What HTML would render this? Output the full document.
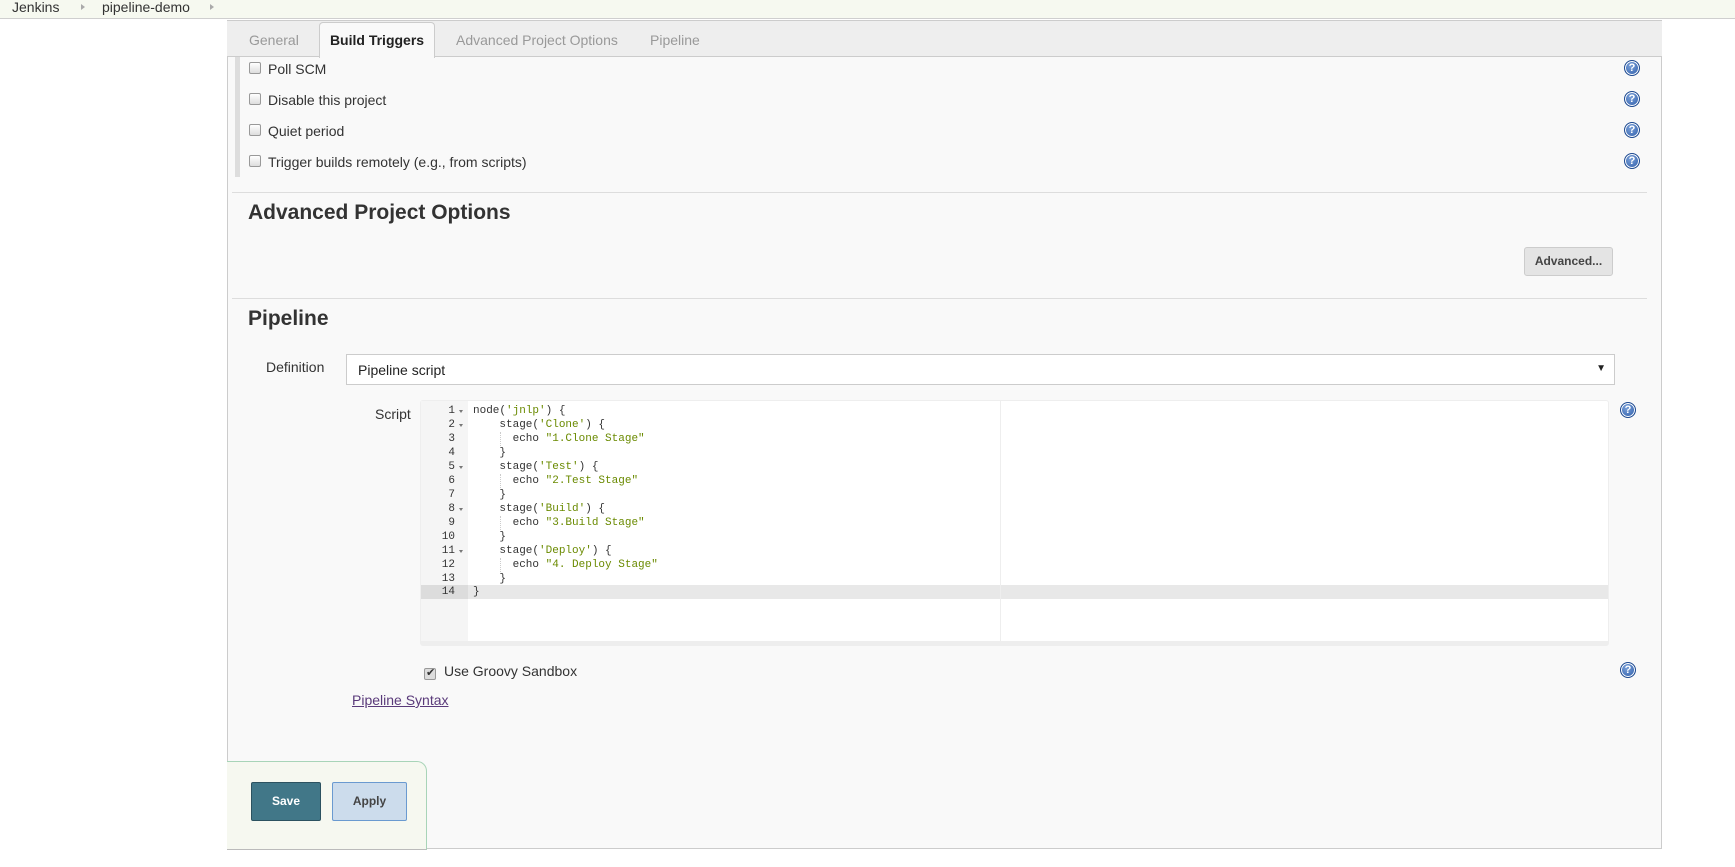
<!DOCTYPE html>
<html><head><meta charset="utf-8"><style>
*{box-sizing:border-box;margin:0;padding:0}
body{width:1735px;height:867px;background:#fff;font-family:"Liberation Sans",Arial,sans-serif;font-size:14px;color:#333;position:relative;overflow:hidden}
.abs{position:absolute}
#bc{left:0;top:0;width:1735px;height:19px;background:#f6f9f0;border-bottom:1px solid #cfcfcf}
#bc span{position:absolute;top:0;font-size:14px;color:#333;line-height:14px}
.arr{width:0;height:0;border-left:4px solid #aaa;border-top:3px solid transparent;border-bottom:3px solid transparent;position:absolute;top:4px}
#panel{left:227px;top:20px;width:1435px;height:829px;background:#f9f9f9;border:1px solid #ccc;border-top:none}
#tabs{left:227px;top:20px;width:1435px;height:37px;background:#eee;border-bottom:1px solid #ccc;border-top:1px solid #ccc}
.tab{position:absolute;top:11px;font-size:14px;color:#999}
#acttab{left:319px;top:22px;width:116px;height:36px;background:#f9f9f9;border:1px solid #ccc;border-bottom:none;border-radius:4px 4px 0 0;font-weight:bold;color:#222;text-align:center;line-height:34px;font-size:14px}
.cb{position:absolute;width:12px;height:12px;border:1px solid #999;border-radius:2px;background:linear-gradient(#fff,#ddd)}
.lbl{position:absolute;font-size:14px;color:#333}
.help{position:absolute;width:16px;height:16px;border-radius:50%;background:radial-gradient(circle at 40% 35%,#7aa0d8,#2a5aa8);border:1px solid #1e4a90;box-shadow:inset 0 0 0 1px #fff;color:#fff;font-weight:bold;font-size:11px;text-align:center;line-height:14px}
.sep{position:absolute;left:232px;width:1415px;height:1px;background:#ddd}
h2{position:absolute;font-size:21px;font-weight:bold;color:#333}
#code{left:420px;top:400px;width:1189px;height:246px;background:#fff;border:1px solid #eee;border-bottom:5px solid #eee;border-radius:3px}
#gut{left:421px;top:401px;width:47px;height:240px;background:#f5f5f5}
.ln{position:absolute;left:421px;width:34px;text-align:right;font-family:"Liberation Mono",monospace;font-size:11px;color:#333;height:14px;line-height:14px}
.cl{position:absolute;left:473px;font-family:"Liberation Mono",monospace;font-size:11px;color:#333;white-space:pre;line-height:14px;height:14px}
.s{color:#6a8a00}
.fold{position:absolute;left:459px;width:0;height:0;border-top:3px solid #777;border-left:2.5px solid transparent;border-right:2.5px solid transparent}
.btn{position:absolute;font-weight:bold;font-size:12px;text-align:center}
</style></head><body>
<div id="bc" class="abs">
<span style="left:12px">Jenkins</span><div class="arr" style="left:81px"></div>
<span style="left:102px">pipeline-demo</span><div class="arr" style="left:210px"></div>
</div>
<div id="panel" class="abs"></div>
<div id="tabs" class="abs">
<span class="tab" style="left:22px">General</span>
<span class="tab" style="left:229px">Advanced Project Options</span>
<span class="tab" style="left:423px">Pipeline</span>
</div>
<div id="acttab" class="abs">Build Triggers</div>
<div class="abs" style="left:235px;top:57px;width:5px;height:120px;background:#ddd"></div>

<div class="cb" style="left:249px;top:62px"></div><span class="lbl" style="left:268px;top:61px">Poll SCM</span>
<div class="cb" style="left:249px;top:93px"></div><span class="lbl" style="left:268px;top:92px">Disable this project</span>
<div class="cb" style="left:249px;top:124px"></div><span class="lbl" style="left:268px;top:123px">Quiet period</span>
<div class="cb" style="left:249px;top:155px"></div><span class="lbl" style="left:268px;top:154px">Trigger builds remotely (e.g., from scripts)</span>
<div class="help" style="left:1624px;top:60px">?</div>
<div class="help" style="left:1624px;top:91px">?</div>
<div class="help" style="left:1624px;top:122px">?</div>
<div class="help" style="left:1624px;top:153px">?</div>

<div class="sep" style="top:192px"></div>
<h2 style="left:248px;top:201px">Advanced Project Options</h2>
<div class="btn" style="left:1524px;top:247px;width:89px;height:29px;background:#e4e4e4;border:1px solid #ccc;border-radius:3px;line-height:27px;color:#444">Advanced...</div>
<div class="sep" style="top:298px"></div>
<h2 style="left:248px;top:307px">Pipeline</h2>

<span class="lbl" style="left:266px;top:359px">Definition</span>
<div class="abs" style="left:346px;top:354px;width:1269px;height:31px;background:#fff;border:1px solid #ccc"><span style="position:absolute;left:11px;top:7px;font-size:14px;color:#222">Pipeline script</span><span style="position:absolute;right:8px;top:8px;font-size:10px;color:#222">&#9660;</span></div>

<span class="lbl" style="left:375px;top:406px">Script</span>
<div id="code" class="abs"></div>
<div id="gut" class="abs"></div>
<div class="abs" style="left:421px;top:585px;width:1187px;height:14px;background:#e8e8e8"></div>
<div class="abs" style="left:421px;top:585px;width:47px;height:14px;background:#dcdcdc"></div>
<div class="abs" style="left:1000px;top:401px;width:1px;height:240px;background:#eee"></div>
<div class="abs" style="left:500px;top:432px;border-left:1px dotted #ccc;height:14px"></div>
<div class="abs" style="left:500px;top:474px;border-left:1px dotted #ccc;height:14px"></div>
<div class="abs" style="left:500px;top:516px;border-left:1px dotted #ccc;height:14px"></div>
<div class="abs" style="left:500px;top:558px;border-left:1px dotted #ccc;height:14px"></div>

<div class="ln" style="top:404px">1</div><div class="fold" style="top:410px"></div><div class="cl" style="top:404px">node(<span class="s">'jnlp'</span>) {</div>
<div class="ln" style="top:418px">2</div><div class="fold" style="top:424px"></div><div class="cl" style="top:418px">    stage(<span class="s">'Clone'</span>) {</div>
<div class="ln" style="top:432px">3</div><div class="cl" style="top:432px">      echo <span class="s">"1.Clone Stage"</span></div>
<div class="ln" style="top:446px">4</div><div class="cl" style="top:446px">    }</div>
<div class="ln" style="top:460px">5</div><div class="fold" style="top:466px"></div><div class="cl" style="top:460px">    stage(<span class="s">'Test'</span>) {</div>
<div class="ln" style="top:474px">6</div><div class="cl" style="top:474px">      echo <span class="s">"2.Test Stage"</span></div>
<div class="ln" style="top:488px">7</div><div class="cl" style="top:488px">    }</div>
<div class="ln" style="top:502px">8</div><div class="fold" style="top:508px"></div><div class="cl" style="top:502px">    stage(<span class="s">'Build'</span>) {</div>
<div class="ln" style="top:516px">9</div><div class="cl" style="top:516px">      echo <span class="s">"3.Build Stage"</span></div>
<div class="ln" style="top:530px">10</div><div class="cl" style="top:530px">    }</div>
<div class="ln" style="top:544px">11</div><div class="fold" style="top:550px"></div><div class="cl" style="top:544px">    stage(<span class="s">'Deploy'</span>) {</div>
<div class="ln" style="top:558px">12</div><div class="cl" style="top:558px">      echo <span class="s">"4. Deploy Stage"</span></div>
<div class="ln" style="top:572px">13</div><div class="cl" style="top:572px">    }</div>
<div class="ln" style="top:585px">14</div><div class="cl" style="top:585px">}</div>
<div class="help" style="left:1620px;top:402px">?</div>

<div class="cb" style="left:424px;top:668px;background:#ddd"><span style="position:absolute;left:1px;top:-3px;font-size:11px;color:#333">&#10004;</span></div>
<span class="lbl" style="left:444px;top:663px">Use Groovy Sandbox</span>
<div class="help" style="left:1620px;top:662px">?</div>
<span class="lbl" style="left:352px;top:692px;color:#5a3a7a;text-decoration:underline">Pipeline Syntax</span>

<div class="abs" style="left:227px;top:761px;width:200px;height:89px;background:#f6f8f0;border:1px solid #a8d4b8;border-left:none;border-bottom:1px solid #bbb;border-radius:0 10px 0 0"></div>
<div class="btn" style="left:251px;top:782px;width:70px;height:39px;background:#417788;border:1px solid #2c5260;border-radius:2px;color:#fff;line-height:37px">Save</div>
<div class="btn" style="left:332px;top:782px;width:75px;height:39px;background:#ccdcec;border:1px solid #6a9ad0;border-radius:2px;color:#444;line-height:37px">Apply</div>
</body></html>
